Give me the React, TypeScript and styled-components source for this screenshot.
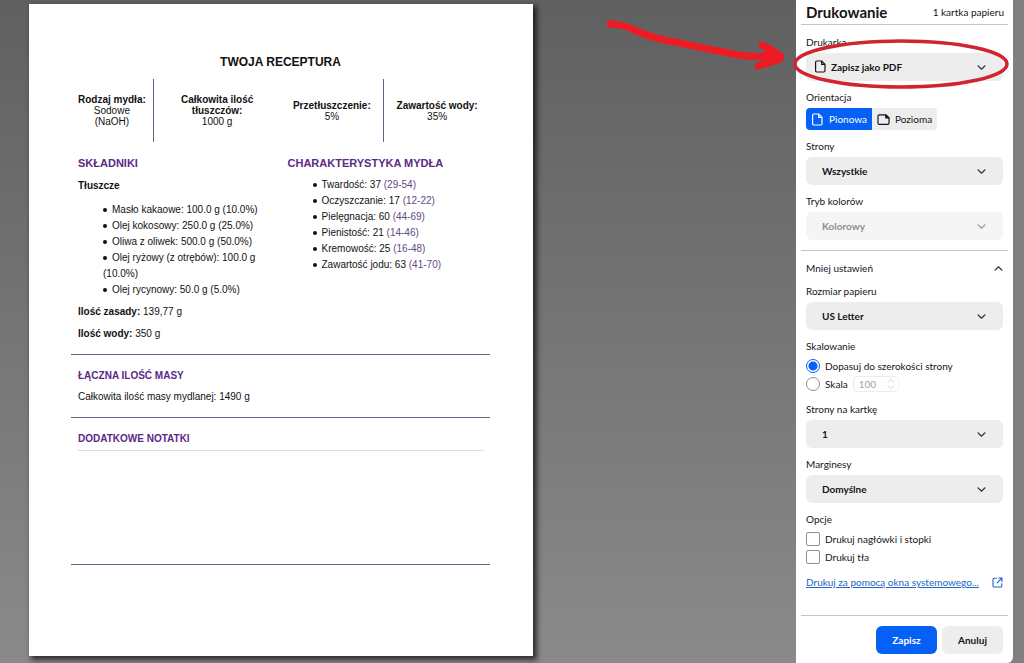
import React from "react";
import styled, { createGlobalStyle, css } from "styled-components";

const GlobalStyle = createGlobalStyle`
  *, *::before, *::after { box-sizing: border-box; }
  body {
    margin: 0;
    background: #808080;
    color: #15141a;
    font-family: Lato, "Noto Sans", sans-serif;
    font-size: 10px;
    line-height: 14px;
  }
  button, select, input { font: inherit; color: inherit; margin: 0; }
`;

const purple = "#5b2a86";
const ruleColor = "#6f5a88";

const Screen = styled.div`
  display: flex;
  min-height: 100vh;
  padding-right: 11px;
`;

const Preview = styled.main`
  flex: 1;
  min-width: 0;
  padding: 4px 29px 7px;
  background: linear-gradient(#606060, #8a8a8a);
`;

const Paper = styled.article`
  width: 100%;
  max-width: 504px;
  aspect-ratio: 504 / 652;
  padding: 50px 43px 0 42px;
  background: #fff;
  box-shadow: 3px 3px 5px 1px rgba(0, 0, 0, 0.65);
  color: #111;
  font-family: "Liberation Sans", Arial, sans-serif;
  line-height: 16px;
`;

const PaperTitle = styled.h1`
  margin: 0 0 9px;
  font-size: 12px;
  line-height: 16px;
  text-align: center;
`;

const Summary = styled.dl`
  display: grid;
  grid-template-columns: 81fr 127fr 104fr 106fr;
  height: 63px;
  margin: 0 0 13px;
  line-height: 11px;
  text-align: center;
`;

const SummaryItem = styled.div<{ $ruled?: boolean; $inset?: number }>`
  display: flex;
  flex-direction: column;
  justify-content: center;
  padding: 0 ${(p) => p.$inset ?? 0}px;
  ${(p) => p.$ruled && css`border-right: 1px solid ${ruleColor};`}
`;

const Term = styled.dt<{ $pull?: boolean }>`
  font-weight: bold;
  ${(p) => p.$pull && css`white-space: nowrap;`}
`;

const Detail = styled.dd`
  margin: 0;
`;

const Columns = styled.div`
  display: grid;
  grid-template-columns: 1fr 1fr;
  padding-bottom: 12px;
`;

const Column = styled.section`
  padding: 0 22px 0 7px;
`;

const Heading = styled.h2<{ $small?: boolean }>`
  margin: 0;
  color: ${purple};
  font-size: ${(p) => (p.$small ? 10 : 11)}px;
  line-height: 16px;
  white-space: nowrap;
`;

const SubHeading = styled.h3`
  margin: 7px 0 8px;
  font-size: 10px;
  line-height: 16px;
`;

const BulletList = styled.ul`
  margin: 0;
  padding: 0 0 0 25px;
  list-style: none;
`;

const Bullet = styled.li`
  &::before {
    content: "";
    display: inline-block;
    width: 4px;
    height: 4px;
    margin-right: 5px;
    border-radius: 50%;
    background: #111;
    vertical-align: 1px;
  }
`;

const TraitList = styled(BulletList)`
  padding-top: 6px;
  white-space: nowrap;
`;

const Range = styled.span`
  color: #5f4b80;
`;

const Fact = styled.p`
  margin: 6px 0 0;
`;

const Block = styled.section<{ $tall?: boolean }>`
  padding: 13px 6px 12px 7px;
  border-top: 1px solid ${ruleColor};
  ${(p) => p.$tall && css`
    height: 148px;
    border-bottom: 1px solid ${ruleColor};
  `}
`;

const BlockText = styled.p`
  margin: 5px 0 0;
`;

const NotesLine = styled.hr`
  margin: 3px 0 0;
  border: 0;
  border-top: 1px solid #ddd;
`;

const Panel = styled.aside`
  position: relative;
  display: flex;
  flex-direction: column;
  flex: 0 0 217px;
  background: #fff;
  border-radius: 0 0 6px 0;
`;

const PanelForm = styled.form`
  display: flex;
  flex: 1;
  flex-direction: column;
  padding: 0 5px;
`;

const PanelHeader = styled.header`
  display: flex;
  align-items: center;
  justify-content: space-between;
  height: 25px;
  padding: 0 4px 0 5px;
  border-bottom: 1px solid #c4c4c8;
`;

const PanelTitle = styled.h2`
  margin: 0;
  font-size: 15px;
  font-weight: bold;
`;

const Group = styled.div`
  display: flex;
  flex-direction: column;
  gap: 9px;
  padding: 10px 5px;
`;

const Field = styled.div`
  display: flex;
  flex-direction: column;
  gap: 4px;
`;

const FieldSet = styled.fieldset`
  min-width: 0;
  margin: 0;
  padding: 0;
  border: 0;
`;

const Caption = styled.label`
  display: block;
`;

const Legend = styled.legend`
  padding: 0 0 4px;
`;

const SelectBox = styled.div<{ $disabled?: boolean }>`
  position: relative;
  display: flex;
  opacity: ${(p) => (p.$disabled ? 0.5 : 1)};
`;

const Select = styled.select<{ $icon?: boolean }>`
  width: 100%;
  height: 28px;
  padding: 0 30px 0 ${(p) => (p.$icon ? 25 : 16)}px;
  appearance: none;
  border: 0;
  border-radius: 6px;
  background: #ededee;
  font-weight: bold;
  opacity: 1;
`;

const SelectArrow = styled.span`
  position: absolute;
  top: 10px;
  right: 17px;
  display: flex;
  pointer-events: none;
`;

const SelectIcon = styled.span`
  position: absolute;
  top: 7px;
  left: 8px;
  display: flex;
  pointer-events: none;
`;

const Toggle = styled.div`
  display: flex;
  width: fit-content;
  overflow: hidden;
  border-radius: 4px;
`;

const ToggleOption = styled.label<{ $active?: boolean }>`
  display: flex;
  align-items: center;
  gap: 5px;
  height: 22px;
  padding: 0 5px;
  background: ${(p) => (p.$active ? "#0561f5" : "#ededee")};
  color: ${(p) => (p.$active ? "#fff" : "#15141a")};
`;

const HiddenRadio = styled.input`
  position: absolute;
  opacity: 0;
  pointer-events: none;
`;

const MoreButton = styled.button`
  display: flex;
  align-items: center;
  justify-content: space-between;
  padding: 0;
  border: 0;
  background: none;
`;

const Rule = styled.hr`
  width: 100%;
  margin: 0;
  border: 0;
  border-top: 1px solid #c4c4c8;
`;

const Choice = styled.div`
  display: flex;
  align-items: center;
  gap: 5px;
  height: 18px;
`;

const Radio = styled.input`
  width: 14px;
  height: 14px;
  appearance: none;
  border: 1px solid #8f8f9d;
  border-radius: 50%;
  background: #fff;
  &:checked {
    border-color: #0561f5;
    background: radial-gradient(circle, #0561f5 4px, #fff 5px);
  }
`;

const Check = styled.input`
  width: 14px;
  height: 14px;
  appearance: none;
  border: 1px solid #8f8f9d;
  border-radius: 2px;
  background: #fff;
`;

const ScaleBox = styled.span`
  display: flex;
  align-items: center;
  height: 16px;
  padding: 0 3px 0 5px;
  border: 1px solid #ececee;
  border-right-color: #f4f4f5;
  border-radius: 4px;
  color: #b0b0b4;
`;

const ScaleInput = styled.input`
  width: 28px;
  padding: 0;
  border: 0;
  background: none;
  appearance: textfield;
  color: #a5a5aa;
  &::-webkit-inner-spin-button { appearance: none; }
`;

const SystemLink = styled.a`
  display: flex;
  align-items: center;
  justify-content: space-between;
  color: #2267c4;
  white-space: nowrap;
`;

const Footer = styled.footer`
  display: flex;
  justify-content: flex-end;
  gap: 5px;
  margin-top: auto;
  padding: 10px 5px 9px;
  border-top: 1px solid #c4c4c8;
`;

const Action = styled.button<{ $primary?: boolean }>`
  width: 61px;
  height: 28px;
  padding: 0;
  border: 0;
  border-radius: 6px;
  background: ${(p) => (p.$primary ? "#0561f5" : "#ededee")};
  color: ${(p) => (p.$primary ? "#fff" : "#15141a")};
  font-weight: bold;
`;

const Annotation = styled.svg`
  position: absolute;
  top: 0;
  left: -196px;
  pointer-events: none;
`;

const Chevron = ({ up }: { up?: boolean }) => (
  <svg width="9" height="9" viewBox="0 0 9 9" fill="none" stroke="#38373d" strokeWidth="1.2" strokeLinecap="round" strokeLinejoin="round">
    <path d={up ? "M1 6.2 4.5 2.8 8 6.2" : "M1 2.8 4.5 6.2 8 2.8"} />
  </svg>
);

const PageIcon = ({ wide }: { wide?: boolean }) => (
  <svg width="13" height="13" viewBox="0 0 13 13" fill="none" stroke="currentColor" strokeWidth="1.2" strokeLinejoin="round">
    {wide ? (
      <>
        <path d="M2.2 1.8H8.8L12 5V10.2Q12 11.4 10.8 11.4H2.2Q1 11.4 1 10.2V3Q1 1.8 2.2 1.8Z" />
        <path d="M8.8 1.8V5H12Z" fill="currentColor" />
      </>
    ) : (
      <>
        <path d="M2.8 1H7.6L11 4.4V10.8Q11 12 9.8 12H2.8Q1.6 12 1.6 10.8V2.2Q1.6 1 2.8 1Z" />
        <path d="M7.6 1V4.4H11" />
      </>
    )}
  </svg>
);

const ExternalIcon = () => (
  <svg width="11" height="11" viewBox="0 0 11 11" fill="none" stroke="currentColor" strokeWidth="1.1" strokeLinecap="round" strokeLinejoin="round">
    <path d="M4.5 1.2H2Q1 1.2 1 2.2V9Q1 10 2 10H8.8Q9.8 10 9.8 9V6.5M6.6 1H10V4.4M10 1 5.2 5.8" />
  </svg>
);

const fats = [
  "Masło kakaowe: 100.0 g (10.0%)",
  "Olej kokosowy: 250.0 g (25.0%)",
  "Oliwa z oliwek: 500.0 g (50.0%)",
  "Olej ryżowy (z otrębów): 100.0 g (10.0%)",
  "Olej rycynowy: 50.0 g (5.0%)",
];

const traits: [string, string][] = [
  ["Twardość: 37", "(29-54)"],
  ["Oczyszczanie: 17", "(12-22)"],
  ["Pielęgnacja: 60", "(44-69)"],
  ["Pienistość: 21", "(14-46)"],
  ["Kremowość: 25", "(16-48)"],
  ["Zawartość jodu: 63", "(41-70)"],
];

type DropdownProps = { id: string; label: string; value: string; disabled?: boolean; icon?: boolean };

const Dropdown = ({ id, label, value, disabled, icon }: DropdownProps) => (
  <Field>
    <Caption htmlFor={id}>{label}</Caption>
    <SelectBox $disabled={disabled}>
      <Select id={id} disabled={disabled} $icon={icon}>
        <option>{value}</option>
      </Select>
      {icon && <SelectIcon><PageIcon /></SelectIcon>}
      <SelectArrow><Chevron /></SelectArrow>
    </SelectBox>
  </Field>
);

const Recipe = () => (
  <Paper>
    <PaperTitle>TWOJA RECEPTURA</PaperTitle>
    <Summary>
      <SummaryItem $ruled $inset={7}>
        <Term $pull>Rodzaj mydła:</Term>
        <Detail>Sodowe (NaOH)</Detail>
      </SummaryItem>
      <SummaryItem $inset={26}>
        <Term>Całkowita ilość tłuszczów:</Term>
        <Detail>1000 g</Detail>
      </SummaryItem>
      <SummaryItem $ruled>
        <Term>Przetłuszczenie:</Term>
        <Detail>5%</Detail>
      </SummaryItem>
      <SummaryItem>
        <Term>Zawartość wody:</Term>
        <Detail>35%</Detail>
      </SummaryItem>
    </Summary>
    <Columns>
      <Column>
        <Heading>SKŁADNIKI</Heading>
        <SubHeading>Tłuszcze</SubHeading>
        <BulletList>
          {fats.map((f) => <Bullet key={f}>{f}</Bullet>)}
        </BulletList>
        <Fact><b>Ilość zasady:</b> 139,77 g</Fact>
        <Fact><b>Ilość wody:</b> 350 g</Fact>
      </Column>
      <Column>
        <Heading>CHARAKTERYSTYKA MYDŁA</Heading>
        <TraitList>
          {traits.map(([name, range]) => (
            <Bullet key={name}>{name} <Range>{range}</Range></Bullet>
          ))}
        </TraitList>
      </Column>
    </Columns>
    <Block>
      <Heading $small>ŁĄCZNA ILOŚĆ MASY</Heading>
      <BlockText>Całkowita ilość masy mydlanej: 1490 g</BlockText>
    </Block>
    <Block $tall>
      <Heading $small>DODATKOWE NOTATKI</Heading>
      <NotesLine />
    </Block>
  </Paper>
);

export default function App() {
  return (
    <>
      <GlobalStyle />
      <Screen>
        <Preview><Recipe /></Preview>
        <Panel>
          <PanelForm onSubmit={(e) => e.preventDefault()}>
            <PanelHeader>
              <PanelTitle>Drukowanie</PanelTitle>
              <span>1 kartka papieru</span>
            </PanelHeader>
            <Group>
              <Dropdown id="printer" label="Drukarka" value="Zapisz jako PDF" icon />
              <FieldSet>
                <Legend>Orientacja</Legend>
                <Toggle>
                  <ToggleOption $active>
                    <HiddenRadio type="radio" name="orientation" defaultChecked />
                    <PageIcon />Pionowa
                  </ToggleOption>
                  <ToggleOption>
                    <HiddenRadio type="radio" name="orientation" />
                    <PageIcon wide />Pozioma
                  </ToggleOption>
                </Toggle>
              </FieldSet>
              <Dropdown id="pages" label="Strony" value="Wszystkie" />
              <Dropdown id="color" label="Tryb kolorów" value="Kolorowy" disabled />
            </Group>
            <Rule />
            <Group>
              <MoreButton type="button" aria-expanded="true">Mniej ustawień<Chevron up /></MoreButton>
              <Dropdown id="paper" label="Rozmiar papieru" value="US Letter" />
              <FieldSet>
                <Legend>Skalowanie</Legend>
                <Choice>
                  <Radio type="radio" name="scaling" id="fit" defaultChecked />
                  <label htmlFor="fit">Dopasuj do szerokości strony</label>
                </Choice>
                <Choice>
                  <Radio type="radio" name="scaling" id="scale" />
                  <label htmlFor="scale">Skala</label>
                  <ScaleBox>
                    <ScaleInput type="number" aria-label="Skala" defaultValue={100} disabled />
                    <svg width="8" height="12" viewBox="0 0 8 12" fill="none" stroke="#d0d0d4" strokeLinecap="round" strokeLinejoin="round">
                      <path d="M1.5 4 4 1.5 6.5 4M1.5 8 4 10.5 6.5 8" />
                    </svg>
                  </ScaleBox>
                </Choice>
              </FieldSet>
              <Dropdown id="per-sheet" label="Strony na kartkę" value="1" />
              <Dropdown id="margins" label="Marginesy" value="Domyślne" />
              <FieldSet>
                <Legend>Opcje</Legend>
                <Choice>
                  <Check type="checkbox" id="headers" />
                  <label htmlFor="headers">Drukuj nagłówki i stopki</label>
                </Choice>
                <Choice>
                  <Check type="checkbox" id="backgrounds" />
                  <label htmlFor="backgrounds">Drukuj tła</label>
                </Choice>
              </FieldSet>
              <SystemLink href="#system">Drukuj za pomocą okna systemowego...<ExternalIcon /></SystemLink>
            </Group>
            <Footer>
              <Action type="submit" $primary>Zapisz</Action>
              <Action type="button">Anuluj</Action>
            </Footer>
          </PanelForm>
          <Annotation width="414" height="100" viewBox="0 0 414 100" fill="none" strokeLinecap="round" strokeLinejoin="round" aria-hidden="true">
            <path stroke="#ed1c24" strokeWidth="7" d="M10 24Q20 24 30 28Q44 35 60 39L138 55Q150 57 180 56" />
            <path stroke="#ed1c24" strokeWidth="7" d="M162 45Q170 48 177 53Q182 57 180 59Q172 62 158 66" />
            <path fill="#ed1c24" d="M165 48 180 58 160 65Z" />
            <ellipse cx="301" cy="64" rx="106" ry="23" stroke="#d0242e" strokeWidth="3.5" />
          </Annotation>
        </Panel>
      </Screen>
    </>
  );
}
